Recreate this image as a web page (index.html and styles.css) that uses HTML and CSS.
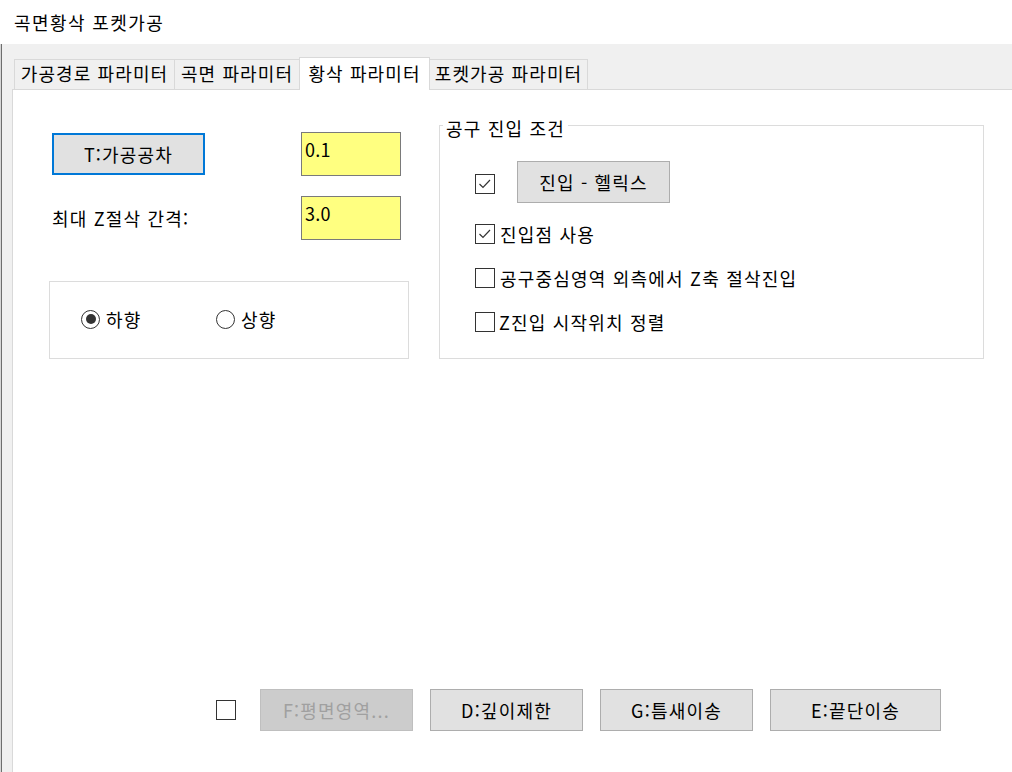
FILE: index.html
```html
<!DOCTYPE html>
<html lang="ko">
<head>
<meta charset="utf-8">
<title>곡면황삭 포켓가공</title>
<link rel="stylesheet" href="styles.css">
</head>
<body>
<div class="window">
  <div class="titlebar">곡면황삭 포켓가공</div>
  <div class="body">
    <div class="tabs">
      <div class="tab t1">가공경로 파라미터</div>
      <div class="tab t2">곡면 파라미터</div>
      <div class="tab t3 active">황삭 파라미터</div>
      <div class="tab t4">포켓가공 파라미터</div>
    </div>
    <div class="pane">
      <div class="content">
        <div class="leftcol">
          <div class="row r1">
            <div class="btn focus">T:가공공차</div>
            <div class="field">0.1</div>
          </div>
          <div class="row r2">
            <span class="label">최대 Z절삭 간격:</span>
            <div class="field">3.0</div>
          </div>
          <div class="radiobox">
            <div class="radio"><span class="rdot on"></span><span>하향</span></div>
            <div class="radio"><span class="rdot"></span><span>상향</span></div>
          </div>
        </div>
        <div class="group">
          <div class="group-title">공구 진입 조건</div>
          <div class="grow g1">
            <span class="cb checked"><svg viewBox="0 0 18 18" width="18" height="18"><polyline points="3.5,9 7,12.5 14,5" fill="none" stroke="#333" stroke-width="1.2"/></svg></span>
            <div class="btn helix">진입 - 헬릭스</div>
          </div>
          <div class="grow g2">
            <span class="cb checked"><svg viewBox="0 0 18 18" width="18" height="18"><polyline points="3.5,9 7,12.5 14,5" fill="none" stroke="#333" stroke-width="1.2"/></svg></span>
            <span class="ctext">진입점 사용</span>
          </div>
          <div class="grow">
            <span class="cb"></span>
            <span class="ctext">공구중심영역 외측에서 Z축 절삭진입</span>
          </div>
          <div class="grow">
            <span class="cb"></span>
            <span class="ctext tight">Z진입 시작위치 정렬</span>
          </div>
        </div>
      </div>
      <div class="bottom">
        <span class="cb bcb"></span>
        <div class="btn disabled">F:평면영역...</div>
        <div class="btn">D:깊이제한</div>
        <div class="btn">G:틈새이송</div>
        <div class="btn wide">E:끝단이송</div>
      </div>
    </div>
  </div>
</div>
</body>
</html>
```

FILE: styles.css
```css
html, body {
  margin: 0;
  padding: 0;
  height: 100%;
}

body {
  font-family: "Noto Sans CJK KR", "Noto Sans", sans-serif;
  font-size: 18px;
  letter-spacing: 1.2px;
  color: #000;
  background: #fff;
  overflow: hidden;
}

.window {
  width: 1012px;
  height: 772px;
  display: flex;
  flex-direction: column;
}

.titlebar {
  flex: none;
  height: 44px;
  line-height: 44px;
  padding-left: 14px;
  background: #fff;
  font-size: 18px;
  letter-spacing: 1.4px;
}

.body {
  flex: 1;
  min-height: 0;
  display: flex;
  flex-direction: column;
  padding-left: 12px;
  background: linear-gradient(to right, #d6d6d6 0 1px, #6e6e6e 1px 2px, #f0f0f0 2px);
}

.tabs {
  flex: none;
  height: 45px;
  display: flex;
  align-items: flex-end;
  margin-left: 2px;
}

.tab {
  box-sizing: border-box;
  height: 30px;
  line-height: 27px;
  border: 1px solid #d9d9d9;
  border-bottom: none;
  background: #f0f0f0;
  text-align: center;
  white-space: nowrap;
  font-size: 18px;
  letter-spacing: 1.1px;
}

.tab + .tab {
  margin-left: -1px;
}

.t1 { width: 161px; }
.t2 { width: 126px; }
.t3 { width: 131px; }
.t4 { width: 159px; }

.tab.active {
  position: relative;
  z-index: 1;
  height: 33px;
  line-height: 31px;
  margin-bottom: -1px;
  background: #fff;
}

.pane {
  flex: 1;
  min-height: 0;
  display: flex;
  flex-direction: column;
  background: #fff;
  border-top: 1px solid #d9d9d9;
  border-left: 1px solid #d9d9d9;
}

.content {
  display: flex;
  align-items: flex-start;
  gap: 30px;
  padding: 35px 0 0 36px;
}

.leftcol {
  width: 360px;
  display: flex;
  flex-direction: column;
}

.row {
  display: flex;
  align-items: center;
  justify-content: space-between;
  height: 44px;
  padding: 0 8px 0 3px;
}

.r1 { margin-top: 7px; }
.r2 { margin-top: 20px; }

.btn {
  box-sizing: border-box;
  width: 153px;
  height: 42px;
  display: flex;
  align-items: center;
  justify-content: center;
  background: #e1e1e1;
  border: 1px solid #adadad;
  white-space: nowrap;
  font-size: 18px;
}

.btn.focus {
  border: 2px solid #0078d7;
}

.btn.disabled {
  background: #cccccc;
  border-color: #bfbfbf;
  color: #a0a0a0;
}

.btn.wide {
  width: 171px;
}

.field {
  box-sizing: border-box;
  width: 100px;
  height: 44px;
  background: #ffff80;
  border: 1px solid #7a7a7a;
  padding: 4px 0 0 3px;
  line-height: 24px;
  font-size: 18px;
  letter-spacing: 0.3px;
}

.label {
  white-space: nowrap;
}

.radiobox {
  box-sizing: border-box;
  margin-top: 41px;
  height: 78px;
  border: 1px solid #dcdcdc;
  display: flex;
  align-items: center;
  padding-left: 31px;
  padding-bottom: 2px;
}

.radio {
  width: 135px;
  display: flex;
  align-items: center;
  gap: 6px;
}

.rdot {
  box-sizing: border-box;
  width: 19px;
  height: 19px;
  border: 1px solid #333;
  border-radius: 50%;
  display: flex;
  align-items: center;
  justify-content: center;
  background: #fff;
}

.rdot.on::after {
  content: "";
  width: 10px;
  height: 10px;
  border-radius: 50%;
  background: #333;
}

.group {
  position: relative;
  box-sizing: border-box;
  width: 545px;
  height: 234px;
  border: 1px solid #dcdcdc;
  padding: 35px 0 0 35px;
}

.group-title {
  position: absolute;
  top: -10px;
  left: 3px;
  padding: 0 3px;
  line-height: 24px;
  background: #fff;
  white-space: nowrap;
}

.grow {
  display: flex;
  align-items: center;
  height: 44px;
}

.grow.g1 {
  height: 42px;
}

.grow.g1 .cb {
  margin-top: 3px;
}

.grow.g2 {
  margin-top: 9px;
}

.cb {
  box-sizing: border-box;
  flex: none;
  width: 20px;
  height: 20px;
  border: 1px solid #333;
  background: #fff;
  display: flex;
  align-items: center;
  justify-content: center;
}

.helix {
  margin-left: 22px;
}

.ctext {
  margin-left: 5px;
  white-space: nowrap;
}

.ctext.tight {
  margin-left: 4px;
}

.bottom {
  margin-top: auto;
  margin-bottom: 41px;
  display: flex;
  align-items: center;
  gap: 17px;
  padding-left: 203px;
}

.bcb {
  margin-right: 7px;
}
```
